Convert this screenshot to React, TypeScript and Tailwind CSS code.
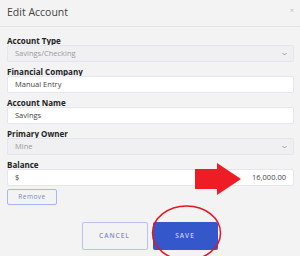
import React from "react";

const Field = ({ label, value, disabled, select, right }: { label: string; value: string; disabled?: boolean; select?: boolean; right?: string }) => (
  <div className="flex flex-col">
    <label className="text-[8px] font-bold text-[#222] leading-[8px] mb-[0px]">{label}</label>
    <div
      className={`h-[17px] flex items-center justify-between px-[7px] border border-[#e3e5f0] rounded-[2px] ${
        disabled ? "bg-[#f0f0f2]" : "bg-white"
      }`}
    >
      <span className={`text-[7.5px] ${disabled ? "text-[#9a9a9a]" : "text-[#444]"}`}>{value}</span>
      {select && (
        <svg width="5" height="4" viewBox="0 0 5 4" className="mr-[-1px]">
          <path d="M0.5 1 L2.5 3 L4.5 1" stroke="#999" strokeWidth="1" fill="none" />
        </svg>
      )}
      {right && <span className="text-[7.5px] text-[#444]">{right}</span>}
    </div>
  </div>
);

export default function App() {
  return (
    <div className="relative w-[300px] h-[256px] overflow-hidden bg-[#f3f3f3]" style={{ fontFamily: '"Open Sans", "Liberation Sans", sans-serif' }}>
      <div className="flex items-center justify-between h-[27px] px-[7px] border-b border-[#e4e4e4]">
        <h1 className="text-[10.5px] text-[#444]">Edit Account</h1>
        <span className="text-[7px] text-[#bbb] leading-none mb-[6px] mr-[-1px]">×</span>
      </div>
      <div className="flex flex-col gap-[6px] pl-[7px] pr-[6px] pt-[10px]">
        <Field label="Account Type" value="Savings/Checking" disabled select />
        <Field label="Financial Company" value="Manual Entry" />
        <Field label="Account Name" value="Savings" />
        <Field label="Primary Owner" value="Mine" disabled select />
        <div className="flex flex-col">
          <Field label="Balance" value="$" right="16,000.00" />
          <button className="mt-[3px] w-[50px] h-[16px] border border-[#a9b6ee] rounded-[2px] text-[6.5px] tracking-[0.5px] text-[#7a86c8] bg-transparent">
            Remove
          </button>
        </div>
      </div>
      <div className="flex justify-center gap-[5px] mt-[17px]">
        <button className="w-[66px] h-[28px] border border-[#b7c2ee] rounded-[2px] text-[6.5px] font-semibold tracking-[1px] text-[#7f8ad0] ml-[-1px]">
          CANCEL
        </button>
        <button className="w-[65px] h-[28px] bg-[#3557cc] rounded-[2px] text-[6.5px] font-semibold tracking-[1px] text-[#c9d2f5]">
          SAVE
        </button>
      </div>
      <svg className="absolute left-0 top-0 pointer-events-none" width="300" height="256">
        <polygon points="195,169 217,169 217,163 241,179 217,195 217,189 195,189" fill="#ee1c25" />
        <ellipse cx="186.5" cy="233" rx="34" ry="27" fill="none" stroke="#e4161f" strokeWidth="1.5" />
      </svg>
    </div>
  );
}
